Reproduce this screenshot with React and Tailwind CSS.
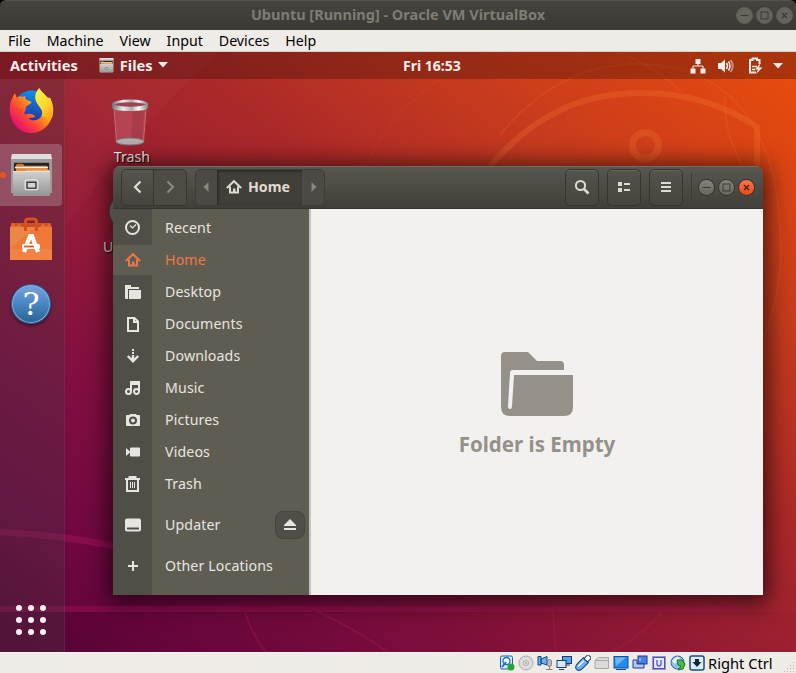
import React from "react";

function Wallpaper() {
  return (
    <svg className="absolute inset-0" width="796" height="600" viewBox="0 52 796 600" fill="none">
      <defs>
        <linearGradient id="shade" x1="0" y1="0" x2="1" y2="0">
          <stop offset="0" stopColor="#4a0030" stopOpacity=".3" />
          <stop offset="1" stopColor="#7a1020" stopOpacity=".12" />
        </linearGradient>
      </defs>
      <path d="M66 79L130 143L180 89L220 52H66Z" fill="#fff" opacity=".025" />
      <path d="M66 225L130 143L66 79Z" fill="#fff" opacity=".02" />
      <g stroke="#ff8a3c" strokeOpacity=".2">
        <path d="M490 166C540 108 590 93 641 93C688 93 725 105 757 127V166" strokeWidth="6" />
        <circle cx="645.5" cy="145.5" r="13" strokeWidth="7" />
        <path d="M365 170C385 115 430 80 490 52" strokeWidth="1" strokeOpacity=".1" />
        <path d="M500 135C540 85 590 63 641 64C720 66 775 115 780 230C784 270 775 310 765 335" strokeWidth="1.8" strokeOpacity=".13" />
        <path d="M617 52C645 62 665 75 682 93M725 96C723 125 733 150 745 170" strokeWidth="1.6" strokeOpacity=".13" />
        <path d="M757 197L775 180M763 210L782 250" strokeWidth="1" strokeOpacity=".1" />
      </g>
      <rect y="612" width="796" height="40" fill="url(#shade)" />
      <path d="M0 606H735L750 612H0Z" fill="#c01365" opacity=".3" />
      <path d="M0 532Q60 535 114 546" stroke="#c01a70" strokeOpacity=".32" strokeWidth="6.5" />
      <g stroke="#d02560" strokeOpacity=".22" strokeWidth="1.5">
        <path d="M245 612Q252 635 266 652M318 612Q350 626 388 652M553 612L556 652M662 612Q640 637 612 652M710 597L735 606" />
      </g>
    </svg>
  );
}

function RoundButton({ kind, dark, close }) {
  const tone = close
    ? "bg-linear-to-b from-[#fa7549] to-[#e64a19] border-[#3b2b22] text-[#46200f]"
    : dark
      ? "bg-[#66645d] border-[#5e5c56] text-[#3b3a36]"
      : "bg-linear-to-b from-[#86847c] to-[#67655e] border-[#34332f] text-[#3b3a35]";
  return (
    <span className={`flex size-[17px] shrink-0 items-center justify-center rounded-full border ${tone}`}>
      <svg width="15" height="15" viewBox="0 0 15 15" stroke="currentColor" fill="none" className="shrink-0">
        {kind === "min" && <path d="M3.5 7.5H11.5" />}
        {kind === "max" && <rect x="4" y="4" width="7" height="7" />}
        {kind === "close" && <path d="M5 5L10 10M10 5L5 10" strokeWidth="1.3" />}
      </svg>
    </span>
  );
}

function CabinetIcon({ size }) {
  return (
    <svg width={size} height={size} viewBox="0 0 42 44">
      <defs>
        <linearGradient id="cab" x1="0" y1="0" x2="0" y2="1">
          <stop offset="0" stopColor="#cfcfcf" />
          <stop offset="1" stopColor="#949494" />
        </linearGradient>
      </defs>
      <path d="M1 1Q1 0 2 0H40Q41 0 42 5V40H0V5Z" fill="#9b9b9b" />
      <path d="M1 0H41L42 5H0Z" fill="#dedede" />
      <rect x="3" y="9" width="36" height="14" fill="#242424" />
      <path d="M5 11L7 10H12L14 12H37V20H5Z" fill="#d9731d" />
      <rect x="4" y="13" width="34" height="1.6" fill="#fff" />
      <rect x="5" y="15" width="33" height="4" fill="#e98a2e" />
      <path d="M3 18H14L17 16H39V20H3Z" fill="#f3aa62" />
      <path d="M2 18H40V43H2Z" fill="url(#cab)" />
      <path d="M2 18H40" stroke="#eee" />
      <rect x="14.5" y="26.5" width="13" height="10" rx="2" fill="#aaa" stroke="#e1e1e1" strokeWidth="1.4" />
      <rect x="16.5" y="29" width="9" height="6" fill="#d5d5d5" stroke="#333" strokeWidth="1.3" />
    </svg>
  );
}

function FirefoxIcon() {
  return (
    <svg width="45" height="47" viewBox="0 0 46 48">
      <defs>
        <linearGradient id="fox" x1=".9" y1=".1" x2=".15" y2=".8">
          <stop offset="0" stopColor="#ffe33d" />
          <stop offset=".4" stopColor="#ff9c14" />
          <stop offset=".72" stopColor="#ff4238" />
          <stop offset="1" stopColor="#e5146f" />
        </linearGradient>
        <linearGradient id="globe" x1=".6" y1="0" x2=".4" y2="1">
          <stop offset="0" stopColor="#0a92f2" />
          <stop offset="1" stopColor="#27278c" />
        </linearGradient>
        <linearGradient id="tail" x1=".2" y1="0" x2=".8" y2="1">
          <stop offset="0" stopColor="#fff14a" />
          <stop offset=".5" stopColor="#ffd92f" />
          <stop offset="1" stopColor="#ff9410" />
        </linearGradient>
      </defs>
      <circle cx="23" cy="21" r="17.5" fill="url(#globe)" />
      <path d="M1 25C0 18 3 12 4.500 9L6 6C7 8 7 9 8 11C10 9 12 9 15 10L17 9C16 12 17 13 20 14L23 15C23 18 18 18 17 21C18 24 15 25 16 28C20 27 22 27 24 28L27 30C26 32 23 31 20 32C24 36 32 34 34 28C36 22 31 17 34 11L42 11C46 19 46 26 44 31C40 42 32 47 23 47C11 47 2 38 1 25Z" fill="url(#fox)" />
      <path d="M31 1C33 5 38 8 42 14C45 19 45 27 44 31C42 35 41 36 38 38C40 32 38 30 33 30C36 24 32 22 29 17C25 11 27 5 31 1Z" fill="url(#tail)" />
    </svg>
  );
}

function SoftwareIcon() {
  return (
    <svg width="42" height="44" viewBox="0 0 42 44">
      <path d="M1 6H41V12H1Z" fill="#c9501f" />
      <path d="M0 10L3 6L6 10L9 6L12 10Z" fill="#e96a2c" />
      <path d="M30 10L33 6L36 10L39 6L42 10Z" fill="#e96a2c" />
      <path d="M0 10H42V43H0Z" fill="#f0793a" />
      <path d="M0 10H25L0 32Z" fill="#e8914f" opacity=".6" />
      <path d="M0 32H42V43H0Z" fill="#f58a4f" opacity=".55" />
      <path d="M15.500 14V5Q15.500 2 18 2H24Q26.500 2 26.500 5V14" fill="none" stroke="#da4f1d" strokeWidth="3" />
      <path d="M14 35L20 19H22L28 35" fill="none" stroke="#fff" strokeWidth="4.200" />
      <rect x="12" y="27" width="18" height="5" rx="1.500" fill="#fff" />
      <rect x="14" y="28.600" width="10" height="1.800" fill="#e8571e" />
    </svg>
  );
}

function HelpIcon() {
  return (
    <span className="flex size-10 items-center justify-center rounded-full border border-[#26619c] bg-linear-to-b from-[#78a3e0] via-[#4786c2] to-[#28628f] font-['DejaVu_Serif'] text-[32px] leading-none text-white shadow-[inset_0_0_0_1px_#82b4e3,0_2px_3px_#0006]">
      ?
    </span>
  );
}

function TrashCan() {
  return (
    <svg width="38" height="48" viewBox="0 0 38 48">
      <defs>
        <linearGradient id="rim" x1="0" y1="0" x2="1" y2="0">
          <stop offset="0" stopColor="#777" />
          <stop offset=".3" stopColor="#eee" />
          <stop offset=".55" stopColor="#aaa" />
          <stop offset=".75" stopColor="#fff" />
          <stop offset="1" stopColor="#888" />
        </linearGradient>
      </defs>
      <path d="M3 8L5.500 43Q19 48 32.500 43L35 8Z" fill="#c9606e" opacity=".5" />
      <path d="M3 10L5.500 43M35 10L32.500 43" stroke="#d08a92" opacity=".65" />
      <path d="M22 12L20 42L31 41L33 12Z" fill="#7a2033" opacity=".22" />
      <ellipse cx="19" cy="42.500" rx="14" ry="3.500" fill="#b5aeae" stroke="#777" />
      <path d="M1 5.500V8.500Q2 12 19 12T37 8.500V5.500Z" fill="url(#rim)" />
      <ellipse cx="19" cy="5.500" rx="17" ry="3.600" fill="#9b4450" stroke="url(#rim)" strokeWidth="2.600" />
    </svg>
  );
}

const HOME = (
  <>
    <path d="M.8 9L8 2.200L15.200 9" fill="none" stroke="currentColor" strokeWidth="2" />
    <path d="M4 7.500V13.500H12V7.500" fill="none" stroke="currentColor" strokeWidth="2" />
    <path d="M7 9.500H9.500V14H7Z" fill="currentColor" />
  </>
);

const GLYPHS = {
  recent: (
    <>
      <circle cx="7.500" cy="7.500" r="6.500" fill="none" stroke="currentColor" strokeWidth="2" />
      <path d="M5 5.500L7.500 8L11 4.500" fill="none" stroke="currentColor" strokeWidth="1.200" />
    </>
  ),
  home: HOME,
  desktop: <path d="M0 1H6V3H14V5H3V15H1Q0 15 0 14ZM4 6H16V14Q16 15 15 15H4Z" fill="currentColor" />,
  documents: <path d="M3 2H9.500L13 5.500V15H3ZM9 2.500V6H13" fill="none" stroke="currentColor" strokeWidth="2" />,
  downloads: (
    <>
      <path d="M8 1V8" stroke="currentColor" strokeWidth="2" strokeDasharray="2 1" />
      <path d="M8 7V13M2.800 8L8 13.200L13.200 8" fill="none" stroke="currentColor" strokeWidth="2.400" />
    </>
  ),
  music: (
    <path d="M6 11V2H14V11M6 4H14M6 11.500A2.500 2.500 0 1 1 1 11.500A2.500 2.500 0 0 1 6 11.500ZM14 11.500A2.500 2.500 0 1 1 9 11.500A2.500 2.500 0 0 1 14 11.500Z" fill="none" stroke="currentColor" strokeWidth="2" />
  ),
  pictures: <path fillRule="evenodd" d="M2 3H4.500L5 2H11L11.500 3H14Q15 3 15 4V13Q15 14 14 14H2Q1 14 1 13V4Q1 3 2 3ZM8 4.500A4 4 0 1 0 8 12.500A4 4 0 1 0 8 4.500ZM8 6.500A2 2 0 1 1 8 10.500A2 2 0 1 1 8 6.500Z" fill="currentColor" />,
  videos: <path d="M1 4L5 7.500V4.500Q5 3.500 6 3.500H14Q15 3.500 15 4.500V11.500Q15 12.500 14 12.500H6Q5 12.500 5 11.500V8.500L1 12Z" fill="currentColor" />,
  trash: (
    <>
      <path d="M0 3H15M4.500 2.500V1H10.500V2.500M2 4V15H13V4" fill="none" stroke="currentColor" strokeWidth="2" />
      <path d="M5.500 6V12M7.500 6V12M9.500 6V12" stroke="currentColor" />
    </>
  ),
  drive: <path fillRule="evenodd" d="M2 1.500H14Q16 1.500 16 3.500V12.500Q16 14.500 14 14.500H2Q0 14.500 0 12.500V3.500Q0 1.500 2 1.500ZM2 10.500V12.500H14V10.500Z" fill="currentColor" />,
  plus: <path d="M8 3V13M3 8H13" stroke="currentColor" strokeWidth="2" />,
  search: (
    <>
      <circle cx="6.500" cy="6.500" r="4.600" fill="none" stroke="currentColor" strokeWidth="2" />
      <path d="M9.500 9.500L14.500 14.500" stroke="currentColor" strokeWidth="2.600" />
    </>
  ),
  list: <path d="M2 3H6V7H2ZM2 9H6V13H2ZM8 4H14V6H8ZM8 10H14V12H8Z" fill="currentColor" />,
  menu: <path d="M3 3H13V5H3ZM3 7H13V9H3ZM3 11H13V13H3Z" fill="currentColor" />,
  back: <path d="M10.500 2.500L5 8L10.500 13.500" fill="none" stroke="currentColor" strokeWidth="2.200" />,
  forward: <path d="M5.500 2.500L11 8L5.500 13.500" fill="none" stroke="currentColor" strokeWidth="2" />,
  left: <path d="M9.500 3V13L4.500 8Z" fill="currentColor" />,
  right: <path d="M6.500 3V13L11.500 8Z" fill="currentColor" />,
  eject: <path d="M8 2L14 8V9H2V8ZM2 11H14V13H2Z" fill="currentColor" />,
};

function Glyph({ name }) {
  return (
    <svg width="16" height="16" viewBox="0 0 16 16" className="shrink-0">
      {GLYPHS[name]}
    </svg>
  );
}

const PLACES = [
  ["recent", "Recent"],
  ["home", "Home"],
  ["desktop", "Desktop"],
  ["documents", "Documents"],
  ["downloads", "Downloads"],
  ["music", "Music"],
  ["pictures", "Pictures"],
  ["videos", "Videos"],
  ["trash", "Trash"],
];

function Place({ icon, label, tall, children }) {
  const active = icon === "home";
  return (
    <div className={`flex shrink-0 items-center ${tall ? "h-[41px]" : "h-8"} ${active ? "text-[#f0754a]" : "text-[#e6e5e2]"}`}>
      <div className={`flex w-[39px] items-center pl-3 ${active ? "h-[30px] bg-[#5f5d51]" : "h-full"}`}>
        <Glyph name={icon} />
      </div>
      <span className="flex-1 pl-[13px] text-[14.2px] leading-5 tracking-[0.12px]">{label}</span>
      {children}
    </div>
  );
}

function HeaderButton({ icon }) {
  return (
    <div className="flex h-[37px] w-[34px] items-center justify-center rounded-[5px] border border-[#35342f] bg-linear-to-b from-[#55534b] to-[#45443e] text-[#dedad0] shadow-[inset_0_1px_#67655c]">
      <Glyph name={icon} />
    </div>
  );
}

function FilesWindow() {
  return (
    <div className="absolute top-[114px] left-[113px] flex h-[429px] w-[650px] flex-col overflow-hidden rounded-t-[7px]">
      <header className="flex h-[43px] shrink-0 items-center border-b border-[#35342f] bg-linear-to-b from-[#59574f] to-[#403f39] pr-2 pl-2 shadow-[inset_0_1px_#706e64]">
        <div className="flex h-[37px] w-[66px] overflow-hidden rounded-[5px] border border-[#37362f]">
          <div className="flex w-8 items-center justify-center border-r border-[#37362f] bg-linear-to-b from-[#56544c] to-[#45443e] text-[#e4dfd3]">
            <Glyph name="back" />
          </div>
          <div className="flex flex-1 items-center justify-center bg-[#4c4b44] text-[#8d8a80]">
            <Glyph name="forward" />
          </div>
        </div>
        <div className="ml-2 flex h-[37px] w-[130px] overflow-hidden rounded-[5px] border border-[#3f3e38]">
          <div className="flex w-[21px] items-center justify-center bg-[#4c4a44] text-[#87847a]"><Glyph name="left" /></div>
          <div className="flex w-[85px] items-center gap-[6px] bg-[#403f39] pl-[9px] text-[14.2px] font-bold text-[#e0dbcf] shadow-[inset_1px_1px_3px_#25241f]">
            <Glyph name="home" />
            <span>Home</span>
          </div>
          <div className="flex flex-1 items-center justify-center bg-[#4c4a44] text-[#87847a]"><Glyph name="right" /></div>
        </div>
        <div className="ml-auto flex gap-2">
          <HeaderButton icon="search" />
          <HeaderButton icon="list" />
          <HeaderButton icon="menu" />
        </div>
        <div className="ml-2 h-7 w-px bg-[#3c3b36]" />
        <div className="ml-[6px] flex gap-[3px]">
          <RoundButton kind="min" />
          <RoundButton kind="max" />
          <RoundButton kind="close" close />
        </div>
      </header>
      <div className="flex min-h-0 flex-1">
        <nav className="flex w-[198px] shrink-0 flex-col border-r-2 border-[#c4c2be] bg-linear-to-r from-[#4f4e47] from-[38px] via-[#44433d] via-[38px] to-[#5f5d51] to-[39px] pt-[3px]">
          {PLACES.map(([icon, label]) => (
            <Place key={icon} icon={icon} label={label} />
          ))}
          <div className="h-[4px]" />
          <Place icon="drive" label="Updater" tall>
            <div className="mr-1 flex h-[28px] w-[30px] items-center justify-center rounded-lg border border-[#45443d] bg-[#504e46]">
              <Glyph name="eject" />
            </div>
          </Place>
          <Place icon="plus" label="Other Locations" tall />
        </nav>
        <main className="flex flex-1 flex-col items-center bg-[#f2f1f0] pt-[143px] text-[#959189]">
          <svg width="72" height="64" viewBox="0 0 72 64" fill="currentColor">
            <path d="M4 0H27L36 9H59Q63 9 63 13V18H12Q9 18 9 21L7 54Q7 57 9 57T11 54L13 23H72V55Q72 64 63 64H9Q0 64 0 55V4Q0 0 4 0Z" />
          </svg>
          <p className="mt-[14px] text-[20.5px] leading-7 font-bold">Folder is Empty</p>
        </main>
      </div>
    </div>
  );
}

function TopPanel() {
  return (
    <div className="relative flex h-[27px] items-center bg-[#380c08]/35 text-[14.6px] font-bold text-[#f5eeec]">
      <div className="flex w-[403px] items-center pl-[10px]">
        <span>Activities</span>
        <span className="ml-[21px] flex"><CabinetIcon size={15} /></span>
        <span className="ml-[6px]">Files</span>
        <svg className="ml-[5px]" width="10" height="6" fill="currentColor"><path d="M0 0H10L5 5.500Z" /></svg>
      </div>
      <span className="text-[14px]">Fri 16:53</span>
      <div className="ml-auto flex items-center pr-[13px]">
        <svg width="16" height="16" viewBox="0 0 16 16" fill="none" stroke="currentColor">
          <path d="M8 5V8M3 11V8H13V11" />
          <path d="M5.500 1H10.500V6H5.500ZM.5 10.500H5.500V15.500H.5ZM10.500 10.500H15.500V15.500H10.500Z" fill="currentColor" stroke="none" />
        </svg>
        <svg className="ml-3" width="16" height="16" viewBox="0 0 16 16" fill="none" stroke="currentColor" strokeWidth="1.500">
          <path d="M0 5H3L7 1.500V14.500L3 11H0Z" fill="currentColor" stroke="none" />
          <path d="M8.500 5Q10.500 8 8.500 11M10.500 3.500Q13.500 8 10.500 12.500" />
          <path d="M12.500 2Q17 8 12.500 14" opacity=".5" strokeWidth="2" />
        </svg>
        <svg className="ml-[14px]" width="15" height="17" viewBox="0 0 15 17" fill="none" stroke="currentColor" strokeWidth="2">
          <path d="M8 15.500H2V3H4.500V1.500H9V3H11.500V7" />
          <path d="M4 9.500H9M4 12.500H7" strokeWidth="1.500" />
          <path d="M12.500 6L7 12.500H10L8 17L14.500 10.500H11Z" fill="currentColor" stroke="none" />
        </svg>
        <svg className="ml-[10px]" width="10" height="6" fill="currentColor"><path d="M0 0H10L5 5.500Z" /></svg>
      </div>
    </div>
  );
}

function Dock() {
  return (
    <div className="relative flex h-[573px] w-[65px] flex-col border-r border-white/5 bg-[#4c3a44]/32">
      <div className="flex h-[65px] w-[62px] justify-center pt-2"><FirefoxIcon /></div>
      <div className="relative flex h-[62px] w-[62px] items-center justify-center rounded-r-[4px] bg-white/20">
        <span className="absolute top-[28px] left-0 size-[6px] rounded-full bg-[#e95420]" />
        <CabinetIcon size={43} />
      </div>
      <div className="flex h-[65px] w-[62px] justify-center pt-[11px]"><SoftwareIcon /></div>
      <div className="flex h-[62px] w-[62px] justify-center pt-[13px]"><HelpIcon /></div>
      <div className="mt-auto mb-[17px] ml-4 grid w-[30px] grid-cols-3 gap-[6px]">
        {Array.from({ length: 9 }, (_, i) => (
          <span key={i} className="size-[6px] rounded-full bg-[#f0eef0]" />
        ))}
      </div>
    </div>
  );
}

const S = { stroke: "#0b4a91", fill: "#69b1ef" };
const STATUS = [
  <g key="hd">
    <rect x="1.500" y="1" width="12" height="13" rx="1.500" fill="#d7ecfb" stroke="#1565ad" />
    <circle cx="7.500" cy="6" r="3.500" fill="#fff" stroke="#1773c0" strokeWidth="1.300" />
    <path d="M3 12L7 7" stroke="#1773c0" strokeWidth="2" />
    <circle cx="12" cy="12" r="3.500" fill="#25a52c" />
  </g>,
  <g key="cd" stroke="#ababab"><circle cx="8" cy="8" r="7" fill="#dcdcdc" /><circle cx="8" cy="8" r="2.500" fill="#eee" /><circle cx="8" cy="8" r=".8" fill="#fff" /></g>,
  <g key="audio">
    <path d="M1 1.500H4V10H1ZM4 4L10 1.500V10L4 8Z" {...S} />
    <rect x="10.500" y="4.500" width="4" height="7" rx="2" fill="#b8b8b8" stroke="#858585" /><path d="M9 14.500H15.500M12.500 12V15" stroke="#858585" />
  </g>,
  <g key="net" stroke="#173c7a"><rect x="6.500" y="1.500" width="9" height="7" fill="#4fa4ec" /><path d="M10 10H14" /><rect x="1" y="5.500" width="9" height="7" fill="#d6eafc" /><path d="M3 14.500H8" /></g>,
  <g key="usb" transform="rotate(45 8 8)"><path d="M4.500 4H11.500V12Q11.500 17 8 17T4.500 12Z" {...S} /><rect x="5.500" y="-1.500" width="5" height="5.500" fill="#fff" stroke="#246" /><path d="M7 6V14" stroke="#fff" strokeWidth="1.500" /></g>,
  <path key="folder" d="M1 13.500V5.500L4.500 2.500H14.500V13.500ZM1 5.500H14" fill="#dadada" stroke="#a8a8a8" />,
  <g key="screen"><rect x="1" y="1.500" width="14" height="11.500" fill="#258bea" stroke="#0c4ea0" /><path d="M2 2.500H13L3 11Z" fill="#6ab8ff" /><path d="M3 14.500H13" stroke="#0c4ea0" /></g>,
  <g key="rec" stroke="#243b96"><rect x="6" y="1" width="9" height="8" fill="#4284df" /><path d="M1 5H5V9H12V13H1Z" fill="#b4c8ff" /><path d="M8 3V6" stroke="#cfe0ff" /></g>,
  <g key="cpu"><rect x="1.500" y="1.500" width="13" height="13" stroke="#3741a5" strokeDasharray="1 1" /><rect x="2.500" y="2.500" width="11" height="11" fill="#e6e8ff" stroke="#4751bd" /><path d="M6 5V9Q6 11 8 11T10 9V5" fill="none" stroke="#4d59ce" strokeWidth="1.300" /></g>,
  <g key="mouse"><circle cx="7.500" cy="7.500" r="6.500" fill="#8dc4ef" stroke="#286ba3" /><path d="M2 6L7 1.500L10 3L5 9Z" fill="#eef7ff" /><path d="M7 5L12 5L15 9L13 14L8 15L11 11L8 10Z" fill="#48ba45" stroke="#147b26" /></g>,
  <g key="key"><rect x="1" y="1" width="14" height="14" rx="2" fill="#d9edfb" stroke="#174c7c" strokeWidth="1.500" /><path d="M6 4H10V7H12.500L8 12L3.500 7H6Z" fill="#152639" /></g>,
];

export default function App() {
  return (
    <div className="flex h-[673px] w-[796px] flex-col overflow-hidden bg-[#efebe7] font-['Noto_Sans',sans-serif]">
      <div className="flex h-[30px] shrink-0 bg-black">
        <div className="grid w-full grid-cols-[1fr_auto_1fr] items-center rounded-t-[6px] border-t border-[#55534c] bg-linear-to-b from-[#45443f] to-[#3a3935] pr-[3px] pb-px">
          <span />
          <span className="pl-[3px] text-[14.5px] font-bold text-[#7f7c75]">Ubuntu [Running] - Oracle VM VirtualBox</span>
          <span className="flex justify-end gap-[3px]">
            <RoundButton kind="min" dark />
            <RoundButton kind="max" dark />
            <RoundButton kind="close" dark />
          </span>
        </div>
      </div>
      <div className="flex h-[22px] shrink-0 items-center gap-4 border-b border-[#d3cfca] pl-2 text-[14.2px] text-black">
        {["File", "Machine", "View", "Input", "Devices", "Help"].map((m) => (
          <span key={m}>{m}</span>
        ))}
      </div>
      <div className="relative h-[600px] shrink-0 overflow-hidden bg-[#9f2230]">
        <div className="absolute inset-0 bg-[linear-gradient(to_top_right,#560334_0%,#700742_14%,#84103f_30%,#9d2033_48%,#aa2829_60%,#c53a1e_76%,#d94315_88%,#e94d0c_100%)]" />
        <Wallpaper />
        <TopPanel />
        <Dock />
        <div className="absolute top-[47px] left-[90px] flex w-20 flex-col items-center text-[14.2px] text-[#eee] [text-shadow:1px_1px_1px_#000]">
          <TrashCan />
          <span className="pl-1 leading-[20px]">Trash</span>
        </div>
        <div className="absolute top-[141px] left-[109px] size-[37px] rounded-full border border-[#555] bg-[#858585]" />
        <span className="absolute top-[184px] left-[103px] text-[14px] text-[#ddd] [text-shadow:1px_1px_1px_#000]">Updater</span>
        <div className="absolute top-[114px] left-[113px] h-[429px] w-[650px] rounded-t-[7px] shadow-[0_3px_22px_6px_#0009]" />
        <FilesWindow />
      </div>
      <div className="flex h-[21px] shrink-0 items-center border-t border-[#f7f5f2] pl-[499px] text-[14.7px] text-black">
        <div className="flex gap-[3px]">
          {STATUS.map((icon, i) => (
            <svg key={i} width="16" height="16" viewBox="0 0 16 16" fill="none">{icon}</svg>
          ))}
        </div>
        <span className="ml-[3px] whitespace-nowrap">Right Ctrl</span>
        <svg className="ml-auto self-end" width="12" height="12" fill="#bab5ae">
          <path d="M9 1H10V2H9ZM6 4H7V5H6ZM9 4H10V5H9ZM3 7H4V8H3ZM6 7H7V8H6ZM9 7H10V8H9ZM0 10H1V11H0ZM3 10H4V11H3ZM6 10H7V11H6ZM9 10H10V11H9Z" />
        </svg>
      </div>
    </div>
  );
}
